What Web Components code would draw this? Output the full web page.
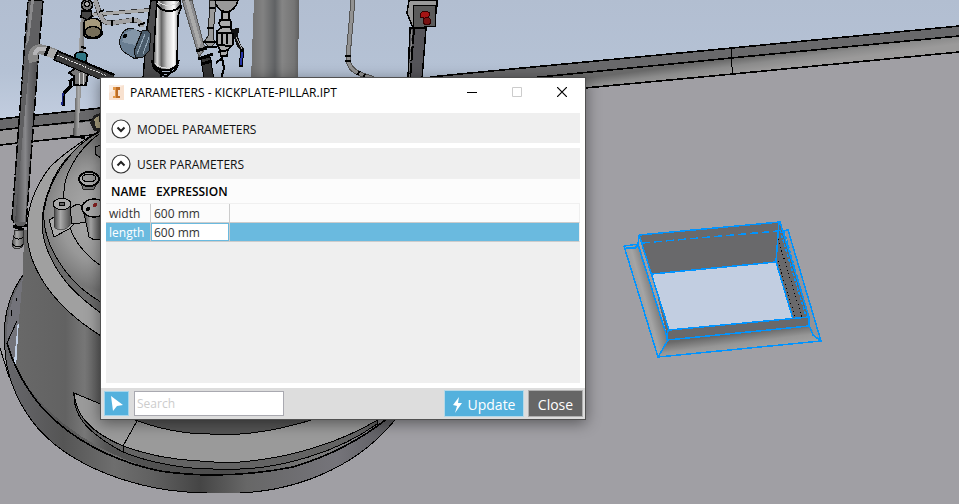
<!DOCTYPE html>
<html lang="en">
<head>
<meta charset="utf-8">
<title>Parameters</title>
<style>
  html, body { margin: 0; height: 100%; }
  body {
    overflow: hidden;
    font-family: "Open Sans", "Noto Sans", sans-serif;
    font-size: 12px;
    color: #000;
  }
</style>
</head>
<body>
<model-viewport>
  <param-window heading="PARAMETERS - KICKPLATE-PILLAR.IPT">
    <param-section label="MODEL PARAMETERS"></param-section>
    <param-section label="USER PARAMETERS" open>
      <param-table></param-table>
    </param-section>
    <param-toolbar slot="footer"></param-toolbar>
  </param-window>
</model-viewport>

<template id="viewport-tpl">
  <style>
    :host { display: block; position: relative; height: 100%; overflow: hidden; background: #a09fa4; }
    svg { display: block; width: 100%; height: 100%; }
    /* the dialog floats over the model */
    ::slotted(param-window) { position: absolute; left: 100px; top: 77px; }
  </style>
  <svg viewBox="0 0 959 504" preserveAspectRatio="xMinYMin slice" shape-rendering="crispEdges" aria-hidden="true">
    <defs>
      <linearGradient id="sky" x2="0" y2="1"><stop stop-color="#b2bed1"/><stop offset=".6" stop-color="#b5c2d5"/><stop offset="1" stop-color="#c2cddf"/></linearGradient>
      <linearGradient id="fillet" gradientUnits="userSpaceOnUse" x1="730" y1="59" x2="732" y2="74"><stop stop-color="#696969"/><stop offset=".5" stop-color="#8b8b8b"/><stop offset="1" stop-color="#9b9a9a"/></linearGradient>
      <linearGradient id="body" gradientUnits="userSpaceOnUse" x1="20" x2="400"><stop stop-color="#686868"/><stop offset=".12" stop-color="#626262"/><stop offset=".17" stop-color="#777"/><stop offset=".23" stop-color="#545454"/><stop offset=".55" stop-color="#4c4c4c"/><stop offset=".75" stop-color="#777"/><stop offset="1" stop-color="#858489"/></linearGradient>
      <linearGradient id="foot" gradientUnits="userSpaceOnUse" x1="5" x2="395"><stop stop-color="#67676b"/><stop offset=".15" stop-color="#555"/><stop offset=".28" stop-color="#6e6e6e"/><stop offset=".38" stop-color="#606060"/><stop offset=".5" stop-color="#454545"/><stop offset=".62" stop-color="#676767"/><stop offset=".85" stop-color="#75747a"/><stop offset="1" stop-color="#5c5c60"/></linearGradient>
      <linearGradient id="pipe"><stop stop-color="#444"/><stop offset=".4" stop-color="#aaa"/><stop offset="1" stop-color="#555"/></linearGradient>
      <linearGradient id="leg"><stop stop-color="#4a4a4c"/><stop offset=".45" stop-color="#88888b"/><stop offset=".6" stop-color="#6b6b6e"/><stop offset="1" stop-color="#4b4b4d"/></linearGradient>
      <linearGradient id="column"><stop stop-color="#707070"/><stop offset=".25" stop-color="#828282"/><stop offset=".5" stop-color="#606264"/><stop offset=".65" stop-color="#858585"/><stop offset=".9" stop-color="#757575"/><stop offset="1" stop-color="#5f5f5f"/></linearGradient>
      <linearGradient id="chrome"><stop stop-color="#333"/><stop offset=".15" stop-color="#ddd"/><stop offset=".3" stop-color="#666"/><stop offset=".5" stop-color="#ccc"/><stop offset=".75" stop-color="#fff"/><stop offset=".9" stop-color="#999"/><stop offset="1" stop-color="#333"/></linearGradient>
      <radialGradient id="dome" gradientUnits="userSpaceOnUse" cx="112" cy="215" r="95"><stop stop-color="#b2b2b2"/><stop offset=".55" stop-color="#989898"/><stop offset=".8" stop-color="#777"/><stop offset="1" stop-color="#888"/></radialGradient>
      <linearGradient id="flangeL" gradientUnits="userSpaceOnUse" x1="638" y1="304" x2="660" y2="298"><stop stop-color="#9b9b9b"/><stop offset=".35" stop-color="#a5a5a5"/><stop offset="1" stop-color="#6c6c6c"/></linearGradient>
      <linearGradient id="flangeB" gradientUnits="userSpaceOnUse" x1="735" y1="334" x2="737" y2="350"><stop stop-color="#696969"/><stop offset=".6" stop-color="#969696"/><stop offset="1" stop-color="#a0a0a0"/></linearGradient>
    </defs>

    <!-- sky, curb and floor -->
    <path fill="#a09fa4" d="M0 0H959V504H0z"/>
    <path fill="url(#sky)" d="M0 0H959V26L460 74L101 112L0 120z"/>
    <path fill="#69696b" d="M0 119L101 107L460 74L959 26V36L440 86L0 131z"/>
    <path fill="url(#fillet)" d="M440 86L959 36V52L585 88L440 100z"/>
    <path fill="#969597" d="M0 130L101 121V133L0 145z"/>
    <g fill="none" stroke="#000" stroke-width="1.6">
      <path d="M0 119L101 108M430 77L460 74L732 48L959 26M0 130L101 119M530 78L731 58L959 36M0 145L101 134M585 88L733 74L959 52"/>
      <path stroke-width="1" d="M732 48L731 60L733 74"/>
    </g>

    <!-- tank foot and shell -->
    <path fill="url(#foot)" stroke="#000" d="M23 275C8 296 2 322 5 350C6 372 15 398 32 421C66 466 137 492 207 493H240C305 490 363 462 398 416L300 300z"/>
    <path fill="#73737a" d="M23 277C9 300 6 322 7 343L16 372L25 360z"/>
    <path fill="#c2d0e6" d="M18 320L19 328L16 367L14 362z"/>
    <path fill="none" stroke="#000" d="M7 343L17 321M0 348L9 377M16 301L17 298M11 316L12 310"/>
    <path fill="url(#body)" d="M24 230L23 276L19 320L16 368C46 425 112 459 160 471C202 477 242 477 293 467C330 456 362 439 388 418L300 250z"/>
    <path fill="none" stroke="#000" stroke-width="1.6" d="M7 343C16 375 36 405 58 423C87 448 125 464 160 471C200 477 242 477 293 467C333 455 363 438 388 418"/>
    <path fill="#636363" stroke="#000" d="M74 393C73 414 84 431 123 452C150 463 185 469 213 469H240C280 468 337 453 377 424V415L102 406z"/>
    <path fill="#9a9a9a" stroke="#000" d="M74 393C76 413 86 430 123 446C150 456 175 460 200 461L228 463L240 462C290 458 340 443 381 418L120 412z"/>
    <path fill="#555" stroke="#000" d="M130 418C155 428 180 434 210 434H240C270 432 293 426 318 418z"/>
    <path fill="none" stroke="#000" d="M137 421L123 446V452M377 421V427"/>

    <!-- tank top: rim and dome -->
    <path fill="#a0a0a0" stroke="#000" d="M101 130C77 143 57 160 50 167C34 188 27 210 27 230C27 265 50 304 101 336L200 336V130z"/>
    <path fill="#6c6c6c" stroke="#000" d="M101 133C75 146 58 164 50 187C40 211 40 231 47 249C58 278 77 296 101 313L200 313V133z"/>
    <path fill="url(#dome)" stroke="#000" d="M101 131C70 146 49 180 44 210C41 240 64 281 101 302L200 300V130z"/>
    <path fill="none" stroke="#000" d="M99 134C76 151 62 177 64 198M70 228C76 245 87 256 101 266"/>
    <path fill="#aaa" stroke="#000" d="M49 220L77 204L84 213L69 229L54 237z"/>
    <path fill="url(#pipe)" stroke="#333" stroke-width=".6" d="M54 205V227C59 232 66 230 70 225V205z"/>
    <ellipse cx="62" cy="204" rx="9" ry="5.500" fill="#a8a8a8" stroke="#000"/><ellipse cx="62" cy="204" rx="3" ry="2" fill="#666" stroke="#000"/>
    <path fill="#777" stroke="#222" d="M81 183L83 189H94L97 183z"/>
    <ellipse cx="89" cy="179" rx="10" ry="7" fill="#aaa" stroke="#000" stroke-width="2"/><ellipse cx="89" cy="178" rx="7" ry="4" fill="#9a9a9a" stroke="#000"/>
    <path fill="#999" stroke="#000" d="M70 208L78 204L85 208L89 222L72 224z"/>
    <path fill="url(#pipe)" stroke="#000" d="M84 213L89 237C94 241 98 240 101 239V213z"/>
    <ellipse cx="94" cy="208" rx="12" ry="9" fill="#aaa" stroke="#000" stroke-width="1.500"/><circle cx="88" cy="209" r="2"/><circle cx="95" cy="205" r="2" fill="#822"/>

    <!-- small pipe with valve on the left -->
    <path fill="url(#pipe)" d="M82 0L87 0L83 60L78 136H73z"/>
    <path fill="none" stroke="#333" stroke-width="4" d="M88 15L150 10"/><path fill="none" stroke="#aaa" stroke-width="3" d="M88 15L150 10"/>
    <path fill="none" stroke="#444" stroke-width="5" d="M95 0L101 17C103 22 106 23 112 23L133 20C138 20 141 21 142 27"/>
    <path fill="none" stroke="#a2a2a4" stroke-width="4" d="M95 0L101 17C103 22 106 23 112 23L133 20C138 20 141 21 142 27"/>
    <path stroke="#000" stroke-width="2" d="M99 12L104 10M112 20V26M133 17V23M138 25L145 23M81 47L86 48M79 84H84M70 136L85 138"/>
    <g stroke="#000" stroke-width="1.500"><circle cx="87" cy="5" r="5.500" fill="#777"/><circle cx="87" cy="4" r="2.500" fill="#aaa"/><path fill="#444" d="M82 11H91L92 16L88 20L81 17z"/>
      <path fill="#a69a7c" d="M84 23C84 18 99 16 101 23L102 34C99 40 87 40 84 35z"/><ellipse cx="93" cy="32" rx="8" ry="5.500" fill="#766e59"/>
      <path fill="#2f7684" d="M75 55C77 51 85 51 87 55L86 62H75z"/></g>
    <path fill="#777" stroke="#000" stroke-width="2" d="M76 63H86L85 69L88 73L86 85H74V76L69 73L74 69z"/>
    <path stroke="#ddd" d="M79 73V85M83 73V85"/>
    <path fill="none" stroke="#000" stroke-width="3" d="M75 78L70 81L71 86L64 93L63 106"/><path stroke="#1c2887" stroke-width="1.500" d="M63 93L62 105"/>
    <path fill="#222" d="M101 113L94 115L90 123L94 131L101 132z"/><path fill="#aaa17f" d="M99 116L94 119L96 128H100z"/>
    <path fill="#777" stroke="#000" d="M95 147L101 145V158L95 154z"/>

    <!-- frame leg and its dark brace -->
    <path fill="#606062" stroke="#000" stroke-width="1.500" stroke-dasharray="14 2" d="M28 0H43L39 48L26 226L17 227L12 219L24 53z"/>
    <path fill="url(#leg)" d="M30 55L38 50L25 222H15z"/>
    <path fill="#8a8a8c" d="M31 0H34L29 40L26 46z"/>
    <path fill="none" stroke="#888" stroke-width="10" d="M34 62C31 51 37 48 44 50L55 54"/>
    <path fill="none" stroke="#b5b5b8" stroke-width="4" d="M35 55C35 49 40 48 45 49L55 53"/>
    <path stroke="#000" stroke-width="11" d="M55 55L113 79"/><path stroke="#3a3a3a" stroke-width="8" d="M57 56L113 80"/>
    <path stroke="#ddd" stroke-dasharray="2 1" d="M57 55L107 76"/><path stroke="#aaa" stroke-width="9" d="M46 51L55 55"/><path stroke="#000" stroke-width="3" d="M45 56L49 46"/>
    <path fill="none" stroke="#000" stroke-width="3" d="M13 226L24 230"/><path fill="url(#pipe)" stroke="#333" d="M15 230H24L23 245C20 251 13 249 12 245z"/>
    <path fill="none" stroke="#000" d="M13 236C16 240 21 240 23 237M12 243C15 248 21 248 23 244"/>

    <!-- actuator, chrome cylinder and piping -->
    <path fill="#4b4b4d" stroke="#000" stroke-width="1.500" d="M151 0H161V79H143L147 28z"/>
    <path fill="#697d91" stroke="#111" d="M120 39C122 30 129 26 136 30L148 35L144 56L135 59L124 52C120 49 119 45 120 39z"/>
    <path fill="#8496a8" d="M126 32L135 29L141 33L135 45L122 42z"/>
    <path fill="#4b5c6b" stroke="#111" d="M142 31L148 30L151 35L149 51L143 57L136 58L134 51z"/>
    <path fill="none" stroke="#93a6b6" d="M145 34L137 54M149 37L143 54"/><circle cx="125" cy="36" r="2"/>
    <path fill="url(#chrome)" stroke="#000" stroke-width="1.500" d="M157 0H180L181 8L178 16L177 62C178 72 157 74 153 65L156 14z"/>
    <path fill="none" stroke="#000" stroke-width="2" d="M157 4C160 13 176 13 181 5M152 60C153 72 175 75 179 60M153 66C156 75 174 77 178 65M159 72L166 77L172 71"/>
    <path fill="none" stroke="#ddd" d="M158 1C163 7 174 7 179 1M155 63C160 69 171 70 176 64"/>
    <path fill="#8c8c8f" stroke="#555" d="M182 0H192L205 49L199 57z"/>
    <path fill="#aaa" d="M185 0H189L201 43L199 49z"/>
    <path fill="#333" stroke="#000" d="M201 59L210 57L214 79H204z"/>
    <path fill="none" stroke="#000" stroke-width="3" d="M196 51L207 48M198 59L213 54M202 64L212 61"/>
    <path fill="#999" stroke="#222" d="M210 0H216L213 36L215 43L210 48L204 42L208 36z"/>
    <path stroke="#000" stroke-width="2" d="M209 8H215M207 28H214M203 42H218M205 47H217"/>
    <path fill="#999" stroke="#000" stroke-width="1.500" d="M215 0H238C237 7 231 12 226 12C219 11 215 5 215 0z"/>
    <path fill="#aaa" stroke="#000" stroke-width="1.500" d="M222 12H229V18L231 22V29L233 33V44L228 50L227 56H221L220 50L217 44V31L221 28L219 23L222 18z"/>
    <path fill="none" stroke="#000" stroke-width="2" d="M219 20H231M220 27H232M216 33H233M222 32V44M227 32V44M217 45L232 46M218 52L229 50M216 63L222 58L224 68L221 79"/>
    <path fill="none" stroke="#111" stroke-width="4" d="M232 30L238 34M237 28L236 37L239 46L242 49V54"/><path fill="none" stroke="#aaa" d="M236 37L242 49"/>
    <path stroke="#000" stroke-width="4" d="M242 49L241 67"/><path stroke="#2734a9" stroke-width="2" d="M242 52L241 65"/>
    <path fill="url(#column)" d="M254 0H299L298 79H251z"/>
    <path fill="none" stroke="#555" stroke-width="5" d="M353 0L348 57C348 66 352 71 363 75L374 79"/>
    <path fill="none" stroke="#929292" stroke-width="3" d="M353 0L348 57C348 66 352 71 363 75L374 79"/>
    <path stroke="#000" stroke-width="2" d="M345 56H351M345 61H351M357 75L360 71M363 78L365 74"/>

    <!-- emergency stop -->
    <path fill="#555459" stroke="#000" stroke-width="1.500" d="M410 28H426L422 79H408z"/><path stroke="#000" stroke-width="2" stroke-dasharray="15 2" d="M414 29L410 79"/><path stroke="#888" stroke-dasharray="8 3" d="M412 30L409 78"/>
    <path fill="#999" stroke="#000" stroke-width="1.500" d="M409 0H437V5L434 26L413 28L407 13z"/>
    <path fill="#5b5b5b" stroke="#000" d="M413 6L435 5L436 26L413 28z"/>
    <path fill="#a61414" stroke="#300" d="M421 13C423 10 429 11 430 14L428 18L431 22C430 26 424 26 423 22L424 18L420 17z"/><ellipse cx="427" cy="21" rx="4" ry="3.500" fill="#711" stroke="#300"/>

    <!-- selected kickplate -->
    <path fill="#949397" d="M785 231L788 230L821 341L809 330z"/>
    <path fill="url(#flangeL)" d="M624 246L639 244L668 340L658 357z"/>
    <path fill="url(#flangeB)" d="M667 340L809 326L821 341L658 357z"/>
    <path fill="#69696b" d="M639 235L780 222L809 317L810 326L667 340L666 331L652 274z"/>
    <path fill="#c2cee1" d="M652 274L776 262L793 319L669 330z"/>
    <g fill="none" stroke="#0094ff" stroke-width="1.500">
      <path d="M624 246L639 244M624 246L658 357L821 341L788 230L782 231M639 235L780 222L809 317V326L667 340M639 235L638 245L668 340L658 357M639 235L669 330L809 317M652 274L776 262L779 222M776 262L793 319M810 327L813 335L821 341M668 330L667 340M626 248H635L638 245"/>
      <path stroke-dasharray="8 4" d="M642 243L778 231"/>
      <path stroke-dasharray="3 2" d="M780 230L806 316M784 231L809 318"/>
    </g>
    <path fill="none" stroke="#000" stroke-dasharray="1 3" d="M778 239L802 317M778 261L795 317"/>
  </svg>
  <slot></slot>
</template>

<template id="window-tpl">
  <style>
    :host { display: block; width: 486px; box-sizing: border-box; background: #fff; border: 1px solid #515151; box-shadow: 0 3px 14px rgba(0, 0, 0, .45); }
    header { display: flex; align-items: center; height: 35px; box-sizing: border-box; padding: 0 1px 7px 8px; }
    h1 { flex: 1; margin: 0 0 0 6px; font-size: 12px; font-weight: 400; white-space: nowrap; }
    nav { display: flex; }
    button { width: 45px; height: 28px; padding: 0; border: 0; background: none; }
    svg { display: block; }
    button svg { margin: auto; }
    main { display: flex; flex-direction: column; gap: 5px; padding: 0 5px 5px; }
  </style>
  <header>
    <svg width="15" height="15" aria-hidden="true"><path fill="#f8e1cf" d="M0 0H15V15H0z"/><path fill="#fbeee4" d="M0 0H15L0 8z"/><path fill="#bc6c26" d="M4 2H11V5H9V11H11V13H4V11H6V5H4z"/><path fill="#e49a4a" d="M4 2H7V13H4V11H6V5H4z"/></svg>
    <h1></h1>
    <nav>
      <button aria-label="Minimize"><svg width="10" height="10"><path d="M0 5H10V6H0z"/></svg></button>
      <button aria-label="Maximize" disabled><svg width="10" height="10"><path fill="none" stroke="#ccc" d="M.5.5H9.500V9.500H.5z"/></svg></button>
      <button aria-label="Close window"><svg width="10" height="10"><path stroke="#000" stroke-width="1.200" d="M0 0L10 10M10 0L0 10"/></svg></button>
    </nav>
  </header>
  <main><slot></slot></main>
  <slot name="footer"></slot>
</template>

<template id="section-tpl">
  <style>
    :host { display: block; background: #efefef; }
    :host([open]) { min-height: 235px; }
    button { display: flex; align-items: center; gap: 6px; width: 100%; height: 30px; padding: 2px 5px 0; border: 0; background: #efefef; font: inherit; color: #111; }
    svg { display: block; }
    :host([open]) .arrow { transform: rotate(180deg); transform-origin: 10px 10px; }
  </style>
  <button><svg width="20" height="20" aria-hidden="true"><circle cx="10" cy="10" r="9" fill="#fff" stroke="#333" stroke-width="1.200"/><path class="arrow" fill="none" stroke="#222" stroke-width="2" d="M6.500 8.500L10 12L13.500 8.500"/></svg><span></span></button>
  <slot></slot>
</template>

<template id="table-tpl">
  <style>
    :host { display: block; }
    table { width: 100%; table-layout: fixed; border-collapse: separate; border-spacing: 0; background: #fcfcfc; }
    th, td { box-sizing: border-box; padding: 0 0 0 3px; text-align: left; white-space: nowrap; overflow: hidden; }
    th { height: 26px; padding-left: 5px; font-weight: 600; border-top: 1px solid #f0f0f0; border-bottom: 1px solid #f0f0f0; }
    td { height: 19px; padding-top: 2px; line-height: 16px; color: #333; border-right: 1px solid #ccc; border-bottom: 1px solid #ccc; }
    td:last-child { border-right-color: #efefef; }
    .name { width: 45px; }
    .expr { width: 79px; }
    .on td { background: #6abadf; color: #fff; }
    .on .edit { padding: 0; }
    input { display: block; width: 100%; height: 18px; box-sizing: border-box; padding: 1px 2px 0; border: 1px solid #6abadf; background: #fff; font: inherit; color: #333; }
  </style>
  <table>
    <colgroup><col class="name"><col class="expr"><col></colgroup>
    <thead><tr><th>NAME</th><th>EXPRESSION</th><th></th></tr></thead>
    <tbody>
      <tr><td>width</td><td>600 mm</td><td></td></tr>
      <tr class="on"><td>length</td><td class="edit"><input aria-label="length" value="600 mm"></td><td></td></tr>
    </tbody>
  </table>
</template>

<template id="toolbar-tpl">
  <style>
    :host { display: flex; align-items: center; height: 31px; padding: 0 2px 0 3px; background: #ddd; }
    button { display: flex; align-items: center; justify-content: center; box-sizing: border-box; height: 27px; padding: 2px 0 0; font: inherit; font-size: 14px; color: #fff; }
    .pick { width: 25px; height: 25px; padding: 0; background: #54b1dd; border: 1px solid #a5d5ec; }
    input { width: 150px; height: 25px; box-sizing: border-box; margin: 0 auto 0 5px; padding: 0 2px; border: 1px solid #a9a9b0; background: #fff; font: inherit; }
    input::placeholder { color: #ccc; opacity: 1; }
    .update { width: 80px; gap: 6px; background: #54b1dd; border: 1px solid #b5d9e8; }
    .close { width: 55px; margin-left: 4px; background: #666; border: 1px solid #b0b0b0; }
  </style>
  <button class="pick" aria-label="Pick"><svg width="13" height="15" aria-hidden="true"><path fill="#fff" d="M1 0L13 9L7 10L3 15z"/></svg></button>
  <input type="text" placeholder="Search" aria-label="Search">
  <button class="update"><svg width="9" height="16" aria-hidden="true"><path fill="#fff" d="M6 0L0 8L4 9L2 16L9 6L5 6z"/></svg>Update</button>
  <button class="close">Close</button>
</template>

<script>
// attach an open root filled from a template
function stamp(el, id) {
  const root = el.attachShadow({ mode: 'open' });
  root.appendChild(document.getElementById(id).content.cloneNode(true));
  return root;
}

class ModelViewport extends HTMLElement {
  constructor() {
    super();
    stamp(this, 'viewport-tpl');
  }
}

class ParamWindow extends HTMLElement {
  constructor() {
    super();
    stamp(this, 'window-tpl');
  }
  connectedCallback() {
    this.shadowRoot.querySelector('h1').textContent = this.getAttribute('heading');
  }
}

class ParamSection extends HTMLElement {
  constructor() {
    super();
    stamp(this, 'section-tpl');
  }
  connectedCallback() {
    const button = this.shadowRoot.querySelector('button');
    button.querySelector('span').textContent = this.getAttribute('label');
    button.setAttribute('aria-expanded', this.hasAttribute('open'));
  }
}

class ParamTable extends HTMLElement {
  constructor() {
    super();
    stamp(this, 'table-tpl');
  }
}

class ParamToolbar extends HTMLElement {
  constructor() {
    super();
    stamp(this, 'toolbar-tpl');
  }
}

customElements.define('model-viewport', ModelViewport);
customElements.define('param-window', ParamWindow);
customElements.define('param-section', ParamSection);
customElements.define('param-table', ParamTable);
customElements.define('param-toolbar', ParamToolbar);
</script>
</body>
</html>
